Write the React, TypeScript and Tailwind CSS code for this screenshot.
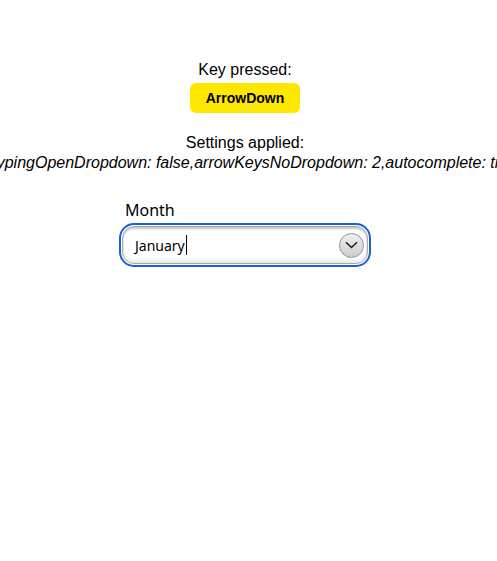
import React from "react";

export default function App() {
  return (
    <div className="w-[497px] h-[561px] bg-white overflow-hidden" style={{ fontFamily: '"Liberation Sans", Arial, sans-serif' }}>
      <div className="w-[490px] flex flex-col items-center pt-[61px] text-black">
        <div className="text-[16px] leading-[18px]">Key pressed:</div>
        <div className="mt-[4px] h-[30px] w-[110px] rounded-[6px] bg-[#ffe800] flex items-center justify-center text-[14px] font-bold">ArrowDown</div>
        <div className="mt-[21px] text-[16px] leading-[18px]">Settings applied:</div>
        <div className="mt-[2px] text-[16px] leading-[18px] italic whitespace-nowrap">disableTypingOpenDropdown: false,arrowKeysNoDropdown: 2,autocomplete: true,id: 1</div>
      </div>
      <div className="ml-[119px] mt-[28px] w-[252px]">
        <div className="pl-[6px] text-[16px] leading-[20px] text-black" style={{ fontFamily: '"Noto Sans", "Open Sans", sans-serif' }}>Month</div>
        <div className="mt-[3px] h-[44px] rounded-[15px] border-2 border-[#1a62d4] p-[1px]">
          <div className="h-full rounded-[12px] border border-[#a8a8a8] shadow-[inset_0_2px_2px_rgba(0,0,0,0.22),inset_0_-3px_3px_rgba(0,0,0,0.08)] flex items-center pl-[12px] pr-[3px]">
            <span className="text-[14px] text-black" style={{ fontFamily: '"Noto Sans", "Open Sans", sans-serif' }}>January</span>
            <span className="w-[1px] h-[20px] bg-black ml-[1px]" />
            <div className="ml-auto w-[25px] h-[25px] rounded-full border border-[#939393] bg-gradient-to-b from-[#f0f0f0] to-[#cdcdcd] flex items-center justify-center">
              <svg width="13" height="8" viewBox="0 0 13 8" fill="none">
                <path d="M1 1.2 L6.5 6.5 L12 1.2" stroke="#1a1a1a" strokeWidth="1.5" />
              </svg>
            </div>
          </div>
        </div>
      </div>
    </div>
  );
}
